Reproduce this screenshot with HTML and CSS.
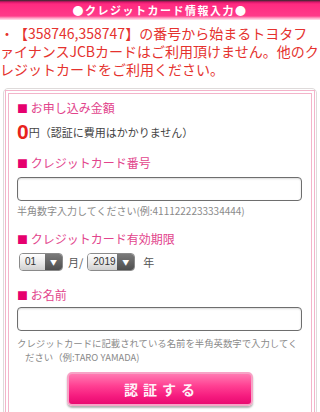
FILE: index.html
```html
<!doctype html>
<html>
  <head>
    <title>クレジットカード情報入力</title>
    <meta name="viewport" content="width=device-width">
    <link rel="stylesheet" href="styles.css">
  </head>
  <body>

    <h1 class="title">●クレジットカード情報入力●</h1>

    <p class="notice">・【358746,358747】の番号から始まるトヨタファイナンスJCBカードはご利用頂けません。他のクレジットカードをご利用ください。</p>

    <div class="box">
      <div class="box-inner">

        <div class="field">
          <div class="field-title"><span class="mark">■</span> お申し込み金額</div>
          <div class="amount"><span class="amount-num">0</span>円（認証に費用はかかりません）</div>
        </div>

        <div class="field field-card">
          <div class="field-title"><span class="mark">■</span> クレジットカード番号</div>
          <input class="text-input" type="text">
          <p class="hint">半角数字入力してください(例:4111222233334444)</p>
        </div>

        <div class="field field-expire">
          <div class="field-title"><span class="mark">■</span> クレジットカード有効期限</div>
          <div class="expire">
            <span class="select select-month"><span class="select-value">01</span><span class="select-arrow">▼</span></span>
            <span class="unit">月/</span>
            <span class="select select-year"><span class="select-value">2019</span><span class="select-arrow">▼</span></span>
            <span class="unit unit-year">年</span>
          </div>
        </div>

        <div class="field field-name">
          <div class="field-title"><span class="mark">■</span> お名前</div>
          <input class="text-input" type="text">
          <p class="hint hint-name">クレジットカードに記載されている名前を半角英数字で入力してください（例:TARO YAMADA)</p>
        </div>

        <div class="actions">
          <button class="submit" type="button">認証する</button>
        </div>

      </div>
    </div>

  </body>
</html>
```

FILE: styles.css
```css
html, body {
  margin: 0;
  padding: 0;
  background: #fff;
}
body {
  font-family: "Noto Sans CJK JP", "Noto Sans", sans-serif;
  overflow: hidden;
  text-spacing-trim: space-all;
}
.title {
  margin: 0;
  height: 20px;
  line-height: 20px;
  font-size: 11px;
  font-weight: bold;
  letter-spacing: 1.5px;
  color: #fff;
  text-align: center;
  background: linear-gradient(#2a2a2a 0, #d8156a 2px, #ff2a80 4px, #ff3a8a 16px, #ff9cc2 18px, #ffe6ef 20px);
}
.notice {
  margin: 4px 0 0;
  padding: 0;
  font-size: 14px;
  line-height: 18px;
  color: #e5322e;
}
.box {
  margin: 10px 3px 0;
  border: 1px solid #dedada;
  border-radius: 5px;
  padding: 1px;
}
.box-inner {
  border: 4px double #f3b4ca;
  border-bottom: 0;
  padding: 6px 9px 8px 8px;
}
.field-title {
  font-size: 12px;
  line-height: 16px;
  color: #e2448c;
}
.mark {
  color: #e6006e;
  font-size: 11px;
}
.amount {
  margin-top: 6px;
  height: 20px;
  line-height: 20px;
  font-size: 11px;
  color: #444;
}
.amount-num {
  font-family: "Liberation Sans", Arial, sans-serif;
  font-size: 21px;
  font-weight: bold;
  color: #e8231c;
  vertical-align: -2px;
}
.field-card {
  margin-top: 13px;
}
.field-expire {
  margin-top: 13px;
}
.field-name {
  margin-top: 16px;
}
.text-input {
  display: block;
  box-sizing: border-box;
  width: 285px;
  height: 24px;
  margin: 6px 0 0;
  border: 1px solid #6e6e6e;
  border-radius: 4px;
  background: #fff;
  box-shadow: inset 0 1px 2px rgba(0,0,0,0.15);
}
.field-name .text-input {
  margin-top: 4px;
}
.hint {
  margin: 3px 0 0;
  font-size: 10px;
  line-height: 14px;
  color: #8a8a8a;
}
.hint-name {
  margin-top: 5px;
  font-size: 9.4px;
  padding-left: 8px;
  text-indent: -8px;
}
.expire {
  margin-top: 6px;
  height: 18px;
  display: flex;
  align-items: center;
  padding-left: 2px;
}
.select {
  display: flex;
  height: 18px;
  box-sizing: border-box;
  border: 1px solid #8a8a8a;
  border-radius: 4px;
  overflow: hidden;
}
.select-month {
  width: 44px;
}
.select-year {
  width: 48px;
  margin-left: 4px;
}
.select-value {
  flex: 1;
  padding-left: 5px;
  font-family: "Liberation Sans", Arial, sans-serif;
  font-size: 10px;
  line-height: 16px;
  color: #333;
  background: linear-gradient(#ffffff, #e6e6e6 60%, #cfcfcf);
}
.select-arrow {
  width: 17px;
  font-size: 7px;
  line-height: 16px;
  text-align: center;
  color: #fff;
  background: linear-gradient(#7a7a7a, #4e4e4e);
}
.unit {
  margin-left: 5px;
  font-size: 11px;
  color: #555;
}
.unit-year {
  margin-left: 8px;
}
.actions {
  margin-top: 8px;
  display: flex;
  justify-content: center;
}
.submit {
  width: 186px;
  height: 34px;
  box-sizing: border-box;
  border: 2px solid #f7a3c6;
  border-radius: 5px;
  background: linear-gradient(#ff7ab2, #ff3f92 40%, #f51a7e 75%, #e80a70);
  box-shadow: 0 2px 2px rgba(0,0,0,0.3);
  color: #fff2f8;
  font-family: "Noto Sans CJK JP", sans-serif;
  font-size: 14px;
  font-weight: bold;
  letter-spacing: 5px;
  padding: 0 0 0 5px;
  line-height: 30px;
}
```
